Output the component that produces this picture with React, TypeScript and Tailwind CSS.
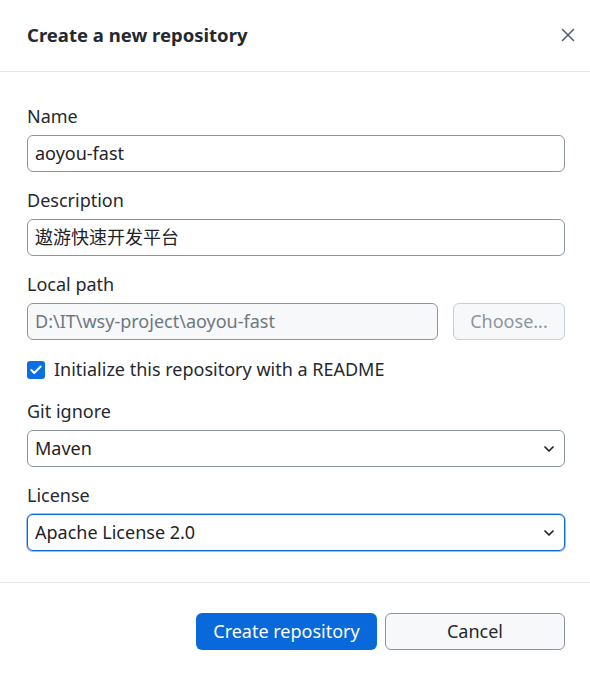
import { X, ChevronDown, Check } from "lucide-react";

const font = { fontFamily: '"Noto Sans", "Noto Sans CJK SC", sans-serif' };

function Field({ label, children }: { label: string; children: React.ReactNode }) {
  return (
    <div className="flex flex-col gap-[7px]">
      <label className="h-6 leading-6 text-[18px] text-[#24292f]">{label}</label>
      {children}
    </div>
  );
}

function Select({ value, focused }: { value: string; focused?: boolean }) {
  return (
    <div
      className={
        "h-[37px] flex items-center justify-between rounded-md bg-white pl-[7px] pr-[7px] text-[18px] text-[#1f2328] " +
        (focused ? "border border-[#0969da] shadow-[0_0_0_1px_#9cc3f5]" : "border border-[#8c959f]")
      }
    >
      <span>{value}</span>
      <ChevronDown size={16} strokeWidth={2.6} className="text-[#1f2328]" />
    </div>
  );
}

export default function App() {
  return (
    <div className="w-[590px] h-[678px] bg-white text-[#1f2328]" style={font}>
      <div className="h-[72px] flex items-center justify-between pl-[27px] pr-[11px] pb-[2px] border-b border-[#e5e7eb]">
        <h1 className="text-[18.5px] font-bold text-[#24292f]">Create a new repository</h1>
        <X size={22} strokeWidth={1.7} className="text-[#57606a]" />
      </div>

      <div className="pl-[27px] pr-[25px] pt-[32px] pb-[31px] flex flex-col gap-[16px] border-b border-[#e5e7eb]">
        <Field label="Name">
          <div className="h-[37px] flex items-center rounded-md border border-[#8c959f] px-[7px] text-[18px]">
            aoyou-fast
          </div>
        </Field>
        <Field label="Description">
          <div className="h-[37px] flex items-center rounded-md border border-[#8c959f] px-[7px] text-[18px]">
            遨游快速开发平台
          </div>
        </Field>
        <Field label="Local path">
          <div className="flex gap-[15px]">
            <div className="flex-1 h-[37px] flex items-center rounded-md border border-[#8c959f] bg-[#f6f8fa] px-[7px] text-[18px] text-[#6e7781]">
              D:\IT\wsy-project\aoyou-fast
            </div>
            <button className="w-[112px] h-[37px] rounded-md border border-[#c9ced4] bg-[#f6f8fa] text-[18px] text-[#8c959f]">
              Choose...
            </button>
          </div>
        </Field>
        <div className="h-[27px] flex items-center gap-[9px]">
          <span className="w-[18px] h-[18px] rounded-[3px] bg-[#0b6fe0] flex items-center justify-center">
            <Check size={14} strokeWidth={3.5} className="text-white" />
          </span>
          <span className="text-[18px] text-[#24292f]">Initialize this repository with a README</span>
        </div>
        <Field label="Git ignore">
          <Select value="Maven" />
        </Field>
        <Field label="License">
          <Select value="Apache License 2.0" focused />
        </Field>
      </div>

      <div className="flex justify-end gap-2 pt-[30px] pr-[25px]">
        <button className="w-[181px] h-[37px] rounded-md bg-[#0969da] text-white text-[18px]">
          Create repository
        </button>
        <button className="w-[180px] h-[37px] rounded-md border border-[#8c959f] bg-[#f6f8fa] text-[18px] text-[#24292f]">
          Cancel
        </button>
      </div>
    </div>
  );
}
